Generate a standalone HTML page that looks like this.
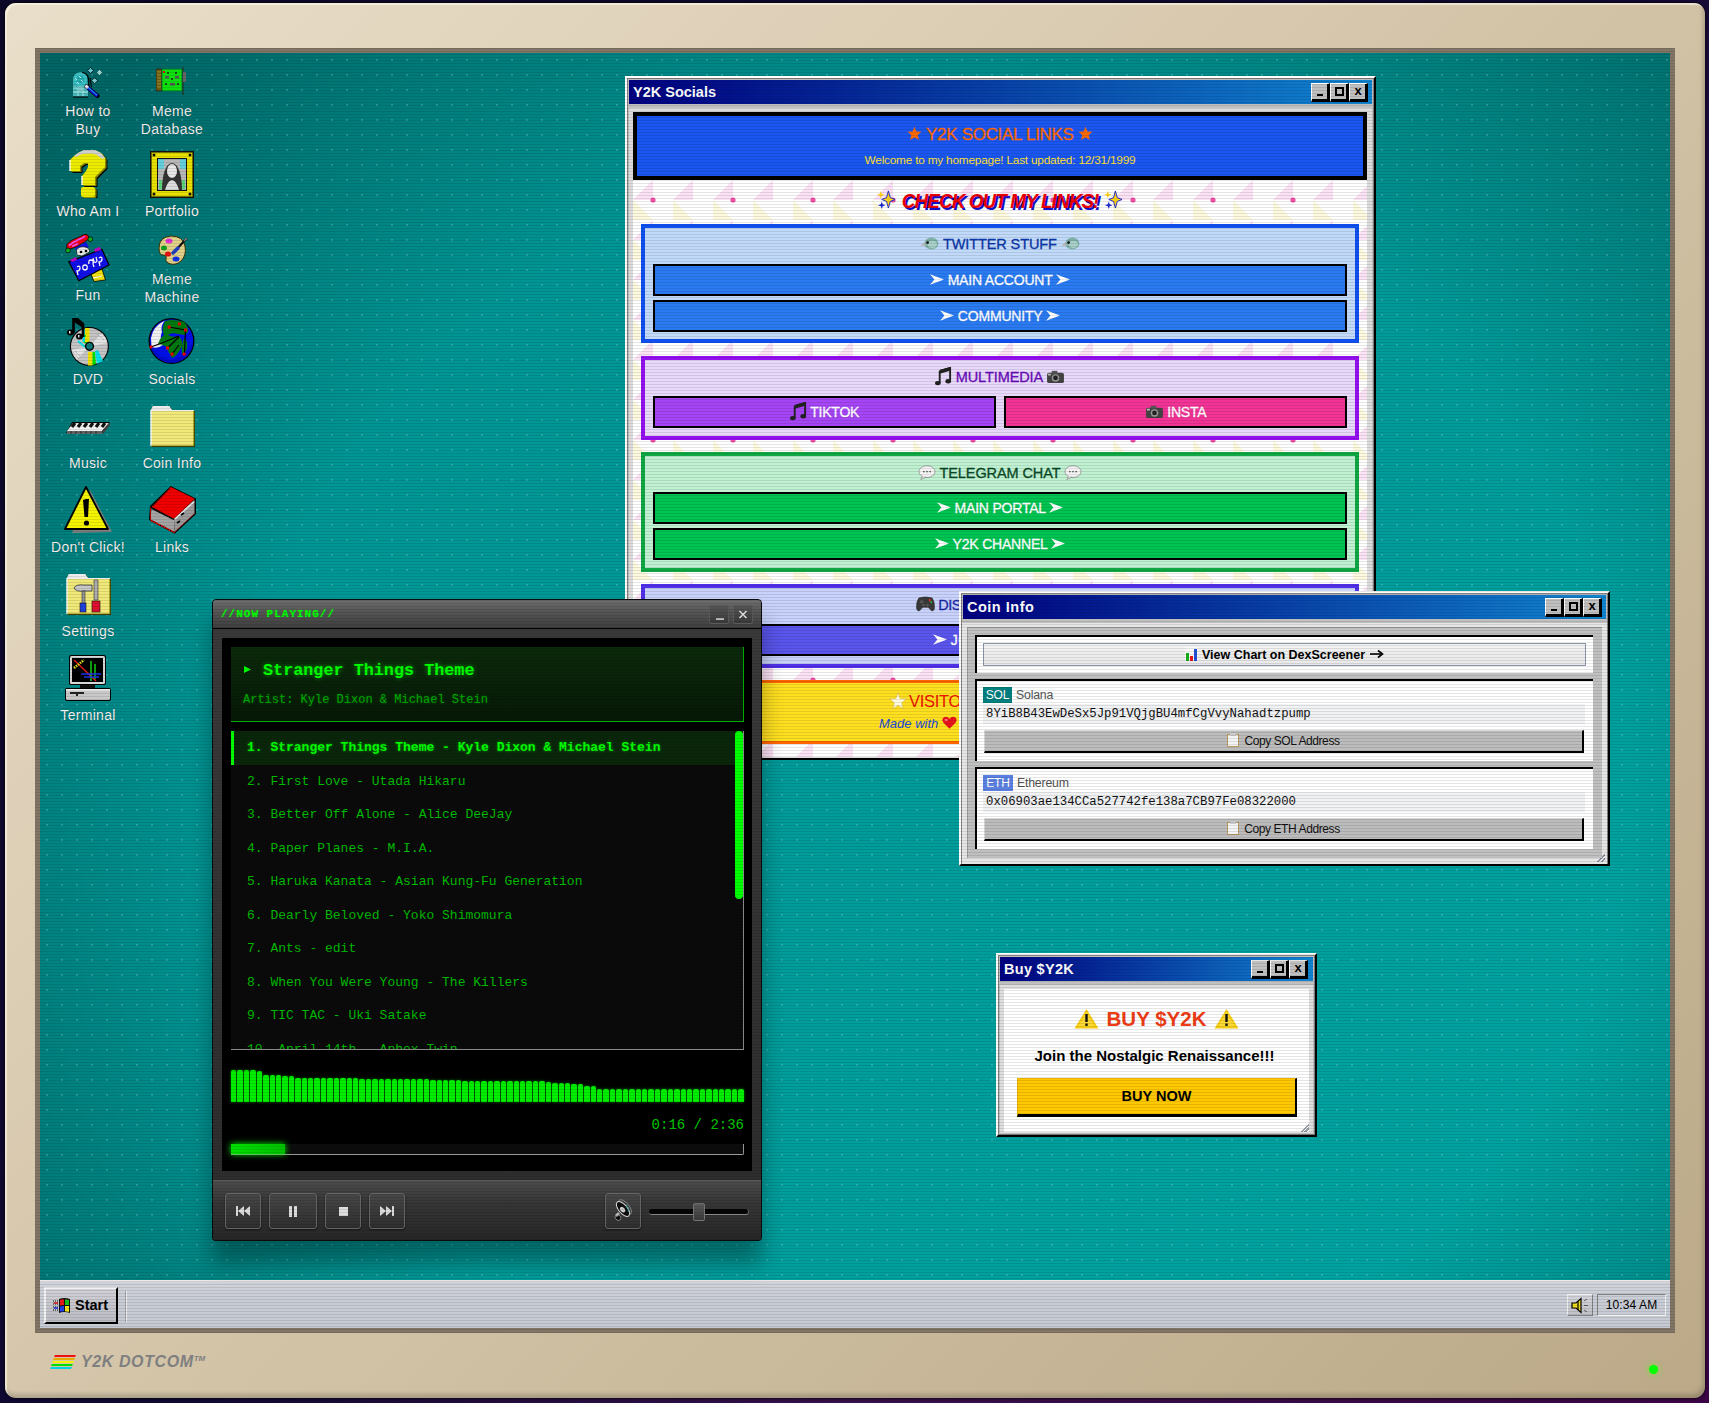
<!DOCTYPE html>
<html><head><meta charset="utf-8">
<style>
*{box-sizing:border-box;margin:0;padding:0}
html,body{width:1709px;height:1403px;overflow:hidden}
body{position:relative;font-family:"Liberation Sans",sans-serif;background:linear-gradient(135deg,#0e0828 0%,#0f0932 50%,#36104a 72%,#3c0546 100%)}
.abs{position:absolute}
#bezel{left:5px;top:3px;width:1700px;height:1395px;border-radius:11px;background:linear-gradient(135deg,#e9dec9 0%,#dfd1b9 25%,#d3c4a8 50%,#c7b798 75%,#bba988 100%);box-shadow:0 0 3px 1px rgba(0,0,0,.6),inset 2px 2px 1px rgba(255,250,235,.6),inset -2px -4px 4px rgba(0,0,0,.18)}
#frame{left:35px;top:48px;width:1640px;height:1285px;background:#817565}
#desk{left:40px;top:53px;width:1630px;height:1227px;overflow:hidden;
 background:radial-gradient(70.7% 84.9% at 55% 60%,rgba(0,0,0,0) 60%,rgba(0,0,0,.3) 100%),linear-gradient(to bottom right,rgb(0,144,143),rgb(0,165,163))}
#dots{left:40px;top:53px;width:1630px;height:1227px}
#scan{left:35px;top:48px;width:1640px;height:1285px;z-index:50;pointer-events:none;
 background:repeating-linear-gradient(180deg,rgba(0,0,0,.1) 0,rgba(0,0,0,.1) 1px,transparent 1px,transparent 3px)}
#taskbar{left:40px;top:1280px;width:1630px;height:48px;background:linear-gradient(180deg,#d0d3da 0%,#c9cdd6 40%,#c6cad3 100%);border-top:2px solid #ebe8ec}

/* win98 windows */
.win{position:absolute;background:#c0c0c0;border:2px solid;border-color:#fff #000 #000 #fff;box-shadow:inset 1px 1px #808080,inset -1px -1px #808080}
.tb{position:absolute;left:2px;right:2px;top:2px;height:24px;background:linear-gradient(90deg,#000080,#1084d0);color:#fff;font-weight:bold;font-size:14.5px;line-height:24px;padding-left:4px}
.tbb{position:absolute;top:3px;width:19px;height:19px;background:#c0c0c0;border:1px solid;border-color:#fff #000 #000 #fff;box-shadow:inset -1px -1px #000}

.pat{background-color:#fff;background-image:
 radial-gradient(circle at 20px 20px,#f050a8 0,#f050a8 2.2px,transparent 2.8px),
 linear-gradient(45deg,transparent 50%,rgba(246,205,240,.7) 50%),
 linear-gradient(135deg,rgba(252,246,205,.8) 50%,transparent 50%);
 background-size:80px 40px,40px 20px,40px 20px;background-position:0 0,0 0,0 20px;background-repeat:repeat,repeat-x,repeat-x}
.cs{font-family:"Liberation Sans",sans-serif}
.sec{position:absolute;left:8px;width:718px;border:4px solid}
.sbtn{position:absolute;left:8px;width:694px;height:32px;border:2px solid #000;color:#fff;font-size:14px;text-align:center;line-height:28px;letter-spacing:-0.2px;-webkit-text-stroke:.3px #fff}
.stitle{position:absolute;left:0;right:0;text-align:center;font-size:14.5px;height:20px;line-height:20px;letter-spacing:-0.1px;-webkit-text-stroke:.3px currentColor}
.ic{display:inline-block;vertical-align:middle}

.tbb{position:absolute;top:5px;width:19px;height:19px;background:#c0c0c0;border-style:solid;border-width:1px 2px 2px 1px;border-color:#fff #000 #000 #fff;z-index:2}
.gmin{position:absolute;left:5px;top:10px;width:6px;height:2px;background:#000}
.gmax{position:absolute;left:4px;top:3px;width:9px;height:9px;border:2px solid #000}
.gx{position:absolute;left:0;top:0;width:16px;line-height:14px;text-align:center;font-style:normal;font-weight:bold;font-size:13px;color:#000}

.np{background:linear-gradient(180deg,#3a3a3a 0%,#333 50%,#2c2c2c 100%);border:1px solid #0a0a0a;border-radius:4px 4px 3px 3px;overflow:hidden;box-shadow:0 22px 22px rgba(0,0,0,.33)}
.nptb{left:0;top:0;width:548px;height:29px;background:linear-gradient(180deg,#6e6e6e 0%,#565656 40%,#3e3e3e 100%);border-bottom:1px solid #000}
.npt{position:absolute;left:8px;top:6px;font-family:'Liberation Mono',monospace;font-weight:bold;font-size:11px;letter-spacing:1px;color:#00ff00;line-height:16px;text-shadow:0 0 2px rgba(0,255,0,.4)}
.npbtn{position:absolute;top:5px;width:20px;height:19px;border:1px solid #5a5a5a;border-radius:2px;background:linear-gradient(180deg,#555,#3a3a3a)}
.npbox{background:linear-gradient(180deg,#0b2a0b 0%,#061806 100%);border-right:1px solid #00b000;border-bottom:1px solid #00b000}
.pl{background:#0a0a0a;overflow:hidden;border-right:1px solid #8a8a8a;border-bottom:1px solid #8a8a8a}
.pli{height:33.5px;line-height:33.5px;padding-left:16px;font-family:'Liberation Mono',monospace;font-size:13px;color:#00bb00;white-space:nowrap}
.pli.act{background:#0a260a;color:#00ff00;font-weight:bold;border-left:3px solid #00ff00;padding-left:13px;text-shadow:0 0 3px rgba(0,255,0,.5)}
.viz{display:flex;align-items:flex-end;gap:1px}
.viz i{display:block;flex:1;background:#00ee00;border-radius:2px 2px 0 0;box-shadow:0 0 3px rgba(0,255,0,.5)}
.npctl{left:0;top:580px;width:548px;height:61px;background:linear-gradient(180deg,#4c4c4c 0%,#363636 35%,#262626 100%);border-top:1px solid #5a5a5a}
.npc{position:absolute;top:12px;height:36px;border:1px solid #666;border-radius:3px;background:linear-gradient(180deg,#474747,#2e2e2e);display:flex;align-items:center;justify-content:center;box-shadow:0 1px 2px rgba(0,0,0,.5)}

.card{position:absolute;width:618px;background:#fff;border-top:2px solid #000;border-left:2px solid #000}
.badge{height:16px;line-height:16px;color:#fff;font-size:12px;text-align:center;letter-spacing:-0.2px}
.clab{height:16px;line-height:16px;color:#555;font-size:12.3px;letter-spacing:-0.2px;margin-left:0}
.addr{width:602px;height:20px;line-height:20px;background:#f1f2f4;padding-left:3px;font-family:'Liberation Mono',monospace;font-size:12.3px;color:#111}
.cbtn{width:600px;height:23px;background:#bcbcbc;border-right:2px solid #000;border-bottom:2px solid #000;border-top:1px solid #d8d8d8;border-left:1px solid #d8d8d8;text-align:center;font-size:12px;line-height:20px;color:#111;letter-spacing:-0.4px}
.ilab{position:absolute;width:120px;height:18px;line-height:18px;text-align:center;color:#f2f2f2;font-size:14px;letter-spacing:.3px;text-shadow:0 0 1px rgba(0,40,40,.6)}
</style></head>
<body>
<svg width="0" height="0" style="position:absolute">
<defs>
<symbol id="arrow" viewBox="0 0 16 12"><path d="M0 0 L16 6 L0 12 L5 6 Z" fill="#fff"/></symbol>
<symbol id="star5" viewBox="0 0 20 20"><path d="M10 1 L12.6 7.2 L19.5 7.6 L14.2 12 L15.9 18.8 L10 15 L4.1 18.8 L5.8 12 L0.5 7.6 L7.4 7.2 Z"/></symbol>
<symbol id="bird" viewBox="0 0 20 16"><ellipse cx="12" cy="8" rx="7.5" ry="6.5" fill="#7fb0a8"/><ellipse cx="13" cy="9" rx="5" ry="4" fill="#a8d0c8"/><path d="M5 7 L0 10 L6 11 Z" fill="#b8b8b8"/><circle cx="8" cy="7" r="1.4" fill="#111"/></symbol>
<symbol id="note" viewBox="0 0 18 20"><path d="M5 4 L16 1 L16 15" stroke="#222" stroke-width="2" fill="none"/><path d="M5 4 L5 17" stroke="#222" stroke-width="2"/><path d="M5 3 L16 0 L16 4 L5 7Z" fill="#222"/><ellipse cx="3" cy="17" rx="3" ry="2.3" fill="#222"/><ellipse cx="14" cy="15" rx="3" ry="2.3" fill="#222"/></symbol>
<symbol id="cam" viewBox="0 0 20 16"><rect x="1" y="4" width="18" height="11" rx="2" fill="#444"/><rect x="6" y="2" width="6" height="3" fill="#555"/><circle cx="10" cy="9.5" r="4" fill="#999"/><circle cx="10" cy="9.5" r="2.5" fill="#222"/><rect x="2" y="5" width="3" height="2" fill="#bbb"/></symbol>
<symbol id="bubble" viewBox="0 0 20 18"><ellipse cx="10" cy="8" rx="9" ry="6.5" fill="#f4f4f4" stroke="#9a9a9a" stroke-width="1"/><path d="M5 13 L3 17 L9 14" fill="#f4f4f4" stroke="#9a9a9a" stroke-width="1"/><circle cx="6.5" cy="8" r="1" fill="#666"/><circle cx="10" cy="8" r="1" fill="#666"/><circle cx="13.5" cy="8" r="1" fill="#666"/></symbol>
<symbol id="pad" viewBox="0 0 20 17"><path d="M3 2 Q10 0 17 2 Q20 6 19.5 13 Q19 16.5 16 15.5 Q14 12 12 12 L8 12 Q6 12 4 15.5 Q1 16.5 0.5 13 Q0 6 3 2Z" fill="#3a3a3a" stroke="#222" stroke-width=".6"/><circle cx="14.5" cy="4.5" r="1.2" fill="#e33"/><circle cx="16" cy="6.5" r="1" fill="#3c3"/><circle cx="6" cy="6" r="2" fill="#555"/><circle cx="8" cy="9.5" r="1.6" fill="#555"/><circle cx="12" cy="9.5" r="1.6" fill="#555"/></symbol>
<symbol id="heart" viewBox="0 0 18 16"><path d="M9 15 L2 8 Q-1 4 2 1.5 Q6 -1 9 3 Q12 -1 16 1.5 Q19 4 16 8 Z" fill="#e8141c"/><ellipse cx="5" cy="4.5" rx="2" ry="1.3" fill="#ff8080"/></symbol>
<symbol id="spark" viewBox="0 0 20 20"><path d="M12 1 L14 8 L19 10 L14 12 L12 19 L10 12 L5 10 L10 8Z" fill="#ffd21a" stroke="#1a2ad0" stroke-width="1"/><path d="M4 1 L5 4 L8 5 L5 6 L4 9 L3 6 L0 5 L3 4Z" fill="#ffd21a"/><path d="M5 12 L6 15 L9 16 L6 17 L5 20 L4 17 L1 16 L4 15Z" fill="#1a2ad0"/></symbol>
<symbol id="starw" viewBox="0 0 20 20"><path d="M10 1 L12.6 7.2 L19.5 7.6 L14.2 12 L15.9 18.8 L10 15 L4.1 18.8 L5.8 12 L0.5 7.6 L7.4 7.2 Z" fill="#fffbe0" stroke="#e8c84a" stroke-width="1"/></symbol>
<pattern id="ptri" x="0" y="28" width="40" height="40" patternUnits="userSpaceOnUse"><path d="M0 20 L20 0 L20 20Z" fill="#fbe2f5"/><path d="M0 20 L20 40 L0 40Z" fill="#fdf9de"/></pattern>
<pattern id="pdot" x="0" y="28" width="80" height="80" patternUnits="userSpaceOnUse"><circle cx="20" cy="60" r="2.6" fill="#f04fa6"/></pattern>
<symbol id="warn" viewBox="0 0 25 21"><path d="M12.5 1 L24.5 20.5 L0.5 20.5Z" fill="#f7cc10"/><path d="M12.5 4 L21 18.5 L4 18.5Z" fill="#ffe14a" opacity=".6"/><rect x="11.3" y="6" width="2.4" height="8" fill="#111"/><rect x="11.3" y="15.5" width="2.4" height="2.4" fill="#111"/></symbol>
</defs></svg>
<div id="bezel" class="abs"></div>
<div id="frame" class="abs"></div>
<div id="desk" class="abs"></div>
<svg id="dots" class="abs" width="1630" height="1227"><defs><pattern id="pdesk" width="15" height="15" patternUnits="userSpaceOnUse"><rect x="6" y="6" width="2" height="2" fill="rgba(190,250,245,.2)"/></pattern></defs><rect width="1630" height="1227" fill="url(#pdesk)"/></svg>
<!--ICONS-->
<div class="abs" style="left:72px;top:66px;width:32px;height:32px"><svg width="32" height="32" viewBox="0 0 32 32">
<path d="M1 14 Q1 7 8 6 Q13 6 15 10 L16 22 L16 31 L1 31Z" fill="#3fb2b4"/>
<circle cx="8.3" cy="13.4" r="6.5" fill="#38c4c8"/><circle cx="8.3" cy="13.4" r="4" fill="#1a9a9c" opacity=".6"/>
<path d="M3 12 l2 2 M7 10 l2 2 M9 14 l2 2 M5 16 l2 2" stroke="#b8f0f0" stroke-width="1"/>
<path d="M10 6.5 Q15 7 16.5 12 L17 21" stroke="#000" stroke-width="1.2" fill="none"/>
<rect x="1" y="20" width="15" height="10.5" fill="#46b6b8"/>
<path d="M1.5 22 h4 M6 22 v8 M11 22 v8 M1 26 h15" stroke="#a8e8e8" stroke-width="1"/><rect x="6" y="20.5" width="5" height="5" fill="#7ccaca"/>
<path d="M1 31 h15" stroke="#000" stroke-width="1.2"/>
<path d="M14.5 20.5 L25.5 30" stroke="#000" stroke-width="4.2" stroke-linecap="round"/><path d="M14.5 20.5 L25.5 30" stroke="#1010d8" stroke-width="3"/><path d="M15.5 21 L25 29.2" stroke="#20e0e0" stroke-width=".9"/><path d="M13.5 19.5 L16 22" stroke="#e8e8e8" stroke-width="3"/>
<path d="M18.5 1.5 L21.5 4.5 L18.5 7.5 L15.5 4.5Z" fill="#60c8cc" stroke="#000" stroke-width=".7"/><path d="M27.5 3.5 L30.5 6.5 L27.5 9.5 L24.5 6.5Z" fill="#9ad8d8" stroke="#1a4a4a" stroke-width=".7"/><path d="M22.6 11.7 L25.6 14.7 L22.6 17.7 L19.6 14.7Z" fill="#7ad0d4" stroke="#000" stroke-width=".7"/>
<path d="M18 12 L19.5 21" stroke="#000" stroke-width="1"/>
</svg></div>
<div class="ilab" style="left:28px;top:102px">How to</div>
<div class="ilab" style="left:28px;top:120px">Buy</div>
<div class="abs" style="left:156px;top:66px;width:32px;height:32px"><svg width="32" height="32" viewBox="0 0 32 32">
<rect x="0" y="3" width="6" height="22" fill="#6a5a10" stroke="#222" stroke-width=".8"/><path d="M1 6 h4 M1 9 h4 M1 12 h4 M1 15 h4 M1 18 h4 M1 21 h4" stroke="#a89838" stroke-width="1"/>
<rect x="6" y="3" width="20" height="22" fill="#10e010" stroke="#063" stroke-width=".8"/>
<rect x="7" y="5" width="2" height="2" fill="#e01010"/>
<rect x="9" y="10" width="4" height="2.5" fill="#555"/><rect x="19" y="10" width="4" height="2.5" fill="#555"/><rect x="14" y="17" width="5" height="2.5" fill="#555"/>
<circle cx="12" cy="7" r=".9" fill="#111"/><circle cx="16" cy="13" r=".9" fill="#111"/><circle cx="10" cy="18" r=".9" fill="#111"/><circle cx="22" cy="18" r=".9" fill="#111"/><circle cx="20" cy="7" r=".9" fill="#111"/>
<rect x="26" y="1" width="2" height="28" fill="#1a4a3a"/><rect x="27" y="6" width="3" height="10" fill="#666"/>
</svg></div>
<div class="ilab" style="left:112px;top:102px">Meme</div>
<div class="ilab" style="left:112px;top:120px">Database</div>
<div class="abs" style="left:64px;top:150px;width:48px;height:48px"><svg width="48" height="48" viewBox="0 0 48 48">
<g transform="translate(2.5,2)"><path d="M6 10 L10 6 L14 3 L20 0 L31 0 L37 3 L41 8 L41 17 L37 21 L33 25 L31 27 L31 35 L18 35 L18 26 L22 21 L24 17 L24 13 L20 13 L16 16 L16 21 L6 21 Z" fill="#000"/><rect x="17" y="37" width="14" height="10" rx="2" fill="#000"/></g>
<g transform="translate(1.5,1)"><path d="M6 10 L10 6 L14 3 L20 0 L31 0 L37 3 L41 8 L41 17 L37 21 L33 25 L31 27 L31 35 L18 35 L18 26 L22 21 L24 17 L24 13 L20 13 L16 16 L16 21 L6 21 Z" fill="#8a8a00"/><rect x="17" y="37" width="14" height="10" rx="2" fill="#8a8a00"/></g>
<path d="M6 10 L10 6 L14 3 L20 0 L31 0 L37 3 L41 8 L41 17 L37 21 L33 25 L31 27 L31 35 L18 35 L18 26 L22 21 L24 17 L24 13 L20 13 L16 16 L16 21 L6 21 Z" fill="#ecec00"/>
<path d="M10 6 L14 3 L20 0 L31 0 L37 3 L41 8 L38 9 L33 5 L28 3.5 L18 4 L12 7Z" fill="#d0d0d0"/>
<path d="M6 10 L6 21 M18 26 L18 35" stroke="#fff" stroke-width="1.4"/>
<rect x="17" y="37" width="14" height="10" rx="2" fill="#ecec00"/>
</svg></div>
<div class="ilab" style="left:28px;top:202px">Who Am I</div>
<div class="abs" style="left:148px;top:150px;width:48px;height:48px"><svg width="48" height="48" viewBox="0 0 48 48">
<rect x="2" y="1" width="44" height="47" fill="#111"/><rect x="3.5" y="2.5" width="41" height="44" fill="#e8e000" stroke="#6a6a00" stroke-width="1" stroke-dasharray="2 1.5"/>
<rect x="9" y="8" width="30" height="33" fill="#111"/><rect x="10" y="9" width="28" height="31" fill="#b8b8b8"/>
<rect x="10" y="9" width="6" height="10" fill="#40d8e8" opacity=".7"/><rect x="32" y="9" width="6" height="10" fill="#40d8e8" opacity=".7"/>
<path d="M14 40 Q14 24 19 16 Q24 10 29 16 Q34 24 34 40Z" fill="#333"/><ellipse cx="24" cy="21" rx="5" ry="7" fill="#e8e8e8"/><path d="M17 40 Q20 30 24 30 Q28 30 31 40Z" fill="#ddd"/>
<rect x="11" y="30" width="3" height="9" fill="#30e060" opacity=".7"/><rect x="34" y="30" width="3" height="9" fill="#30e060" opacity=".7"/>
<circle cx="6" cy="5" r="1.5" fill="#111"/><circle cx="42" cy="5" r="1.5" fill="#111"/><circle cx="6" cy="44" r="1.5" fill="#111"/><circle cx="42" cy="44" r="1.5" fill="#111"/>
</svg></div>
<div class="ilab" style="left:112px;top:202px">Portfolio</div>
<div class="abs" style="left:64px;top:234px;width:48px;height:48px"><svg width="48" height="48" viewBox="0 0 48 48">
<path d="M2.5 15 L3 10 L8 6 L14 3.5 L20 0.5 L23 0.5 L25.5 4 L22 7 L17 10 L12 13 L6 15Z" fill="#f00010" stroke="#000" stroke-width=".7"/>
<path d="M5 11.5 L10 8 L16 5 L21 2.5 M8 12.5 L14 9.5" stroke="#f050f0" stroke-width="1.6"/>
<circle cx="26.3" cy="5.2" r="2.4" fill="#10b020" stroke="#000" stroke-width=".7"/><circle cx="4" cy="16.4" r="2.4" fill="#10b020" stroke="#000" stroke-width=".7"/>
<path d="M11 14 L22 8 L25 13 L14 19Z" fill="#1010e0"/>
<path d="M12.4 16 Q15 12 21 13 Q26 14 25.5 18 L18 22 L13 21Z" fill="#e8e8e8" stroke="#000" stroke-width=".6"/><circle cx="17" cy="18" r="1.3" fill="#000"/><circle cx="22" cy="17" r="1.3" fill="#000"/>
<path d="M25.9 37.5 L38 35 L41.5 46 L30 47.5Z" fill="#f0e010" stroke="#000" stroke-width=".8"/><path d="M29 44 L38 42" stroke="#fff" stroke-width="1"/>
<path d="M4.8 27.9 L37.9 15.2 L45.1 31.1 L14.8 46.7Z" fill="#1010e8" stroke="#000" stroke-width="1.2"/>
<path d="M6 26 L12 23 L13 26 L8 28Z" fill="#c000c0"/><path d="M30 15 L36 13 L37 16 L31 18Z" fill="#c000c0"/>
<path d="M13 33 q3 -2 3 1 q0 3 -3 3 l1 4 M19 35 q-1 -4 2 -4 q3 0 2 4 q-2 2 -4 0 M25 30 q-1 -4 2 -4 q3 0 2 4 l1 3 M29 24 l1 4 q2 1 3 -1 l-1 -4 M35 24 q3 -2 3 1 q0 3 -3 3 l1 4" stroke="#fff" stroke-width="1.3" fill="none"/>
</svg></div>
<div class="ilab" style="left:28px;top:286px">Fun</div>
<div class="abs" style="left:156px;top:234px;width:32px;height:32px"><svg width="32" height="32" viewBox="0 0 32 32">
<path d="M3 14 Q3 3 15 2 Q27 2 29 12 Q31 22 24 28 Q18 32 12 29 Q9 27 10 24 Q11 21 7 21 Q3 21 3 14Z" fill="#e0d088" stroke="#3a3000" stroke-width="1"/>
<ellipse cx="13" cy="7" rx="3.5" ry="2.5" fill="#e030d8"/><ellipse cx="8" cy="14" rx="3" ry="2.5" fill="#10a020"/><ellipse cx="12" cy="20" rx="3" ry="2.6" fill="#e81010"/><ellipse cx="20" cy="25" rx="3.5" ry="2.5" fill="#1030e8"/>
<path d="M19 17 L31 4" stroke="#111" stroke-width="2.2"/><path d="M17 19 L22 14" stroke="#2040c0" stroke-width="3.5" stroke-linecap="round"/><path d="M28 7 L31 4" stroke="#888" stroke-width="1.5"/>
</svg></div>
<div class="ilab" style="left:112px;top:270px">Meme</div>
<div class="ilab" style="left:112px;top:288px">Machine</div>
<div class="abs" style="left:64px;top:318px;width:48px;height:48px"><svg width="48" height="48" viewBox="0 0 48 48">
<circle cx="25.4" cy="28.4" r="19.5" fill="#000"/><circle cx="25.4" cy="28.4" r="18.4" fill="#c4c4c4"/>
<path d="M25.4 28.4 L38 15 Q42 19 43 25Z" fill="#e8e8e8" opacity=".9"/><path d="M25.4 28.4 L12.8 41.8 Q9 38 7.8 32Z" fill="#e8e8e8" opacity=".9"/>
<path d="M33 16 L40 22 M36 14 L42 20 M9 34 L15 41 M11 33 L17 39" stroke="#9a9a9a" stroke-width="1" stroke-dasharray="1 1"/>
<rect x="21" y="10" width="4.5" height="14" fill="#f0e000"/><rect x="18.5" y="11" width="2.5" height="13" fill="#00e0e8"/>
<rect x="24" y="34" width="4.5" height="13.5" fill="#f0e000"/><path d="M28.5 34 L31 34 L32 46 L28.5 47Z" fill="#00e000"/><path d="M31 33 L34 32 L39 43 L33 46Z" fill="#00e0e8"/>
<path d="M14 23 L21 29" stroke="#00e0e8" stroke-width="2"/><path d="M16 19 Q19 17 22 18 M20 24 Q23 26 25 24" stroke="#00e000" stroke-width="1.6" fill="none"/>
<circle cx="25.5" cy="28.3" r="4.6" fill="#000"/><circle cx="25.5" cy="28.3" r="3.2" fill="#0a7a7a"/>
<path d="M9.5 15 L9.5 0 L12 0 L19 6 L19 19" stroke="#000" stroke-width="2.6" fill="none" stroke-linejoin="bevel"/>
<path d="M10 0 L19 6 L19 10 L10 4Z" fill="#000"/>
<ellipse cx="6.5" cy="14.5" rx="3.6" ry="3" fill="#000"/><ellipse cx="15.5" cy="18.5" rx="3.6" ry="3" fill="#000"/>
<rect x="5" y="13" width="1.5" height="2.5" fill="#e8e8e8"/><rect x="14" y="17" width="1.5" height="2.5" fill="#e8e8e8"/>
</svg></div>
<div class="ilab" style="left:28px;top:370px">DVD</div>
<div class="abs" style="left:148px;top:318px;width:48px;height:48px"><svg width="48" height="48" viewBox="0 0 48 48">
<circle cx="23.5" cy="23" r="23" fill="#000"/><circle cx="23.5" cy="23" r="21.8" fill="#0010e8"/>
<path d="M23.5 23 m-21.8 0 a21.8 21.8 0 0 0 43.6 0 Q40 38 24 42 Q10 40 3 28Z" fill="#0008b0" opacity=".55"/>
<path d="M3 20 Q5 8 17 2.5 Q12 8 14 14 Q11 20 15 27 Q10 31 3.5 29Z" fill="#f0f0f0"/>
<path d="M17 3 Q26 0.5 36 4 Q41 9 40 14 L37 17 L30 16 Q24 14 20 17 Q26 20 31 18 Q36 24 33 30 Q29 38 24 40 Q20 34 19 29 Q14 26 10 26 Q12 20 16 17 Q13 11 17 3Z" fill="#007a10"/>
<path d="M36 20 Q40 22 39 30 Q37 36 34 36 Q33 28 36 20Z" fill="#007a10"/>
<path d="M21 9 L37.5 12 M37.5 12 L36.5 36 M14 25 L31 18 M19.5 30 L31 19 M24 36 L31 27 M3 29 L14 25" stroke="#000" stroke-width="1.2"/>
<rect x="19.5" y="7.5" width="3.2" height="3.2" rx="1.2" fill="#ee0000"/><rect x="30" y="4.5" width="3" height="3" fill="#ee0000"/><rect x="36" y="10.5" width="3" height="3" fill="#ee0000"/>
<rect x="1.5" y="27.5" width="3" height="3" rx="1" fill="#ee0000"/><rect x="18" y="28.5" width="3" height="3" fill="#ee0000"/><rect x="22.5" y="34.5" width="3.2" height="3.2" rx="1.2" fill="#ee0000"/><rect x="34.5" y="34.5" width="3.2" height="3.2" rx="1.2" fill="#ee0000"/>
</svg></div>
<div class="ilab" style="left:112px;top:370px">Socials</div>
<div class="abs" style="left:64px;top:402px;width:48px;height:48px"><svg width="48" height="48" viewBox="0 0 48 48">
<path d="M8 20 L46 20 L38 31 L2 31Z" fill="#000"/>
<path d="M9 21 L45 21 L38 29 L3 29Z" fill="#f0f0f0"/>
<path d="M3 29 L38 29 L38 32 L3 32Z" fill="#666"/><path d="M38 29 L45 21 L46 23 L39 32Z" fill="#444"/>
<path d="M11 21 L8 25 M17 21 L14 25 M23 21 L20 25 M29 21 L26 25 M35 21 L32 25 M41 21 L38 25" stroke="#111" stroke-width="3"/>
<path d="M7 29 v3 M12 29 v3 M17 29 v3 M22 29 v3 M27 29 v3 M32 29 v3" stroke="#222" stroke-width=".8"/>
</svg></div>
<div class="ilab" style="left:28px;top:454px">Music</div>
<div class="abs" style="left:148px;top:402px;width:48px;height:48px"><svg width="48" height="48" viewBox="0 0 48 48">
<path d="M3 8 L5 4 L21 4 L24 8 L46 8 L46 44 L3 44Z" fill="#000" transform="translate(1,1)"/>
<path d="M3 8 L5 4 L21 4 L24 8 L46 8 L46 44 L3 44Z" fill="#f0e878"/>
<path d="M3 8 L5 4 L21 4 L24 8 L46 8 L46 9 L3 9Z" fill="#ececec"/><path d="M3 8 L3 44" stroke="#f8f8f8" stroke-width="1.5"/>
<path d="M46 9 L46 44 L3 44" stroke="#808000" stroke-width="1.2" fill="none"/>
</svg></div>
<div class="ilab" style="left:112px;top:454px">Coin Info</div>
<div class="abs" style="left:64px;top:486px;width:48px;height:48px"><svg width="48" height="48" viewBox="0 0 48 48">
<path d="M26 4 L48 46 L8 47 Z" fill="#808080"/>
<path d="M22 1 L44 43 L1 43 Z" fill="#f4f400" stroke="#000" stroke-width="1.8" stroke-linejoin="round"/>
<path d="M22 13 L25 13 L24 31 L20.5 31 L19 14Z" fill="#000"/><circle cx="22.5" cy="37" r="2.6" fill="#000"/>
</svg></div>
<div class="ilab" style="left:28px;top:538px">Don't Click!</div>
<div class="abs" style="left:148px;top:486px;width:48px;height:48px"><svg width="48" height="48" viewBox="0 0 48 48">
<path d="M2 20 L22.7 0 L48 12.5 L48 28 L26.7 47.8 L1 34 Z" fill="#000"/>
<path d="M3.5 22 L25.9 33 L26.7 46 L2.5 33.5Z" fill="#a4a4a4"/>
<path d="M25.9 32.7 L46.5 13.8 L46.5 27.5 L26.7 46Z" fill="#9a9a9a"/>
<path d="M27 33 L46 15.5" stroke="#e8e8e8" stroke-width="1.6"/>
<path d="M36 21 l3 -2 M33 29 l3 -2 M29 37 l3 -2" stroke="#000" stroke-width="1.6"/>
<path d="M3.6 20.7 L22.7 1 L46.8 12.8 L25.9 32.7 Z" fill="#ee0000"/>
<path d="M5 20 L22 2.5" stroke="#000" stroke-width="1" stroke-dasharray="1.2 1"/>
<path d="M3.6 22.5 L25.9 33.5" stroke="#000" stroke-width="1.2"/>
<path d="M3 34.5 L26.5 46.5" stroke="#ee0000" stroke-width="1.6" stroke-dasharray="2 .8"/><path d="M27 45.5 L46.5 27.5" stroke="#ee0000" stroke-width="1" stroke-dasharray="1 1.2"/>
<path d="M2.5 21.5 L2.5 34" stroke="#c00000" stroke-width="1"/>
</svg></div>
<div class="ilab" style="left:112px;top:538px">Links</div>
<div class="abs" style="left:64px;top:570px;width:48px;height:48px"><svg width="48" height="48" viewBox="0 0 48 48">
<path d="M3 8 L5 4 L21 4 L24 8 L46 8 L46 44 L3 44Z" fill="#000" transform="translate(1,1)"/>
<path d="M3 8 L5 4 L21 4 L24 8 L46 8 L46 44 L3 44Z" fill="#f0e878"/>
<path d="M3 8 L5 4 L21 4 L24 8 L46 8 L46 9 L3 9Z" fill="#ececec"/><path d="M3 8 L3 44" stroke="#f8f8f8" stroke-width="1.5"/>
<path d="M46 9 L46 44 L3 44" stroke="#808000" stroke-width="1.2" fill="none"/>
<path d="M10 18 Q12 14 20 15 L28 15 L28 21 L20 21 Q12 22 10 18Z" fill="#c8c8c8" stroke="#333" stroke-width=".8"/>
<rect x="18" y="21" width="3" height="13" fill="#999" stroke="#333" stroke-width=".6"/><rect x="16" y="33" width="6" height="9" fill="#2040e0" stroke="#111" stroke-width=".6"/>
<path d="M30 10 L34 10 L34 30 L30 30Z" fill="#b0b0b0" stroke="#333" stroke-width=".6"/><rect x="28" y="31" width="8" height="11" fill="#e01030" stroke="#111" stroke-width=".6"/>
</svg></div>
<div class="ilab" style="left:28px;top:622px">Settings</div>
<div class="abs" style="left:64px;top:654px;width:48px;height:48px"><svg width="48" height="48" viewBox="0 0 48 48">
<rect x="5" y="1" width="37" height="30" rx="2" fill="#000"/><rect x="6" y="2" width="35" height="28" rx="1.5" fill="#d8d8d8"/><rect x="8" y="4" width="31" height="24" fill="#000"/>
<path d="M10 6 L32 27" stroke="#e81818" stroke-width="1.5"/><path d="M10 14 L20 6" stroke="#e8e018" stroke-width="2.5" stroke-dasharray="1.5 1"/>
<path d="M27 7 L27 27 M31 10 L31 25" stroke="#18e018" stroke-width="1.4"/><path d="M17 20 L37 20 M20 23 L35 23" stroke="#1830e8" stroke-width="1.4"/>
<rect x="16" y="31" width="15" height="3" fill="#111"/>
<rect x="1" y="34" width="46" height="13" rx="2" fill="#000"/><rect x="2" y="35" width="44" height="11" rx="1.5" fill="#c8c8c8"/><rect x="2" y="35" width="44" height="2" fill="#f0f0f0"/>
<rect x="6" y="38" width="14" height="2" fill="#222"/><rect x="12" y="40" width="2" height="2" fill="#222"/>
</svg></div>
<div class="ilab" style="left:28px;top:706px">Terminal</div>
<!--/ICONS-->
<div id="taskbar" class="abs">
 <div class="abs" style="left:4px;top:5px;width:74px;height:37px;border:2px solid;border-color:#f4f4f4 #000 #000 #f4f4f4;background:linear-gradient(180deg,#d0d0d6,#bcbcc4)">
  <svg class="abs" style="left:7px;top:8px" width="18" height="17" viewBox="0 0 18 17"><path d="M0 4 h5 M0 7 h5 M0 10 h5 M0 13 h5" stroke="#000" stroke-width="1" stroke-dasharray="1 1"/><path d="M1 6 h4" stroke="#e01010" stroke-width="1.5"/><path d="M1 11 h4" stroke="#1030e0" stroke-width="1.5"/><path d="M6 2 Q11 0 17 2 L17 16 Q11 14 6 16Z" fill="#111"/><path d="M7 3 Q9 2 11 2.5 L11 8 L7 8.5Z" fill="#e81818"/><path d="M12 2.5 Q14 2.2 16 3 L16 8 L12 8Z" fill="#18c018"/><path d="M7 9.5 L11 9 L11 14.5 Q9 14 7 14.8Z" fill="#2040f0"/><path d="M12 9 L16 9 L16 15 Q14 14.2 12 14.5Z" fill="#f0e020"/></svg>
  <div class="abs" style="left:29px;top:7px;font-weight:bold;font-size:14.5px;line-height:18px;color:#000">Start</div>
 </div>
 <div class="abs" style="left:85px;top:9px;width:2px;height:31px;background:#eeeef0;border-left:1px solid #a0a0a8"></div>
 <div class="abs" style="left:1527px;top:12px;width:26px;height:22px;border:1px solid;border-color:#f0f0f0 #808080 #808080 #f0f0f0;background:linear-gradient(180deg,#d4d4da,#c0c0c8)">
  <svg class="abs" style="left:3px;top:2px" width="20" height="17" viewBox="0 0 20 17"><path d="M1 6 L5 6 L10 1.5 L10 15.5 L5 11 L1 11Z" fill="#f0e020" stroke="#000" stroke-width="1.2"/><path d="M7 4 L7 13" stroke="#000" stroke-width="1.2"/><path d="M13 4 L16 2 M13 8.5 L17 8.5 M13 13 L16 15" stroke="#555" stroke-width="0.9"/></svg>
 </div>
 <div class="abs" style="left:1557px;top:12px;width:69px;height:22px;border:1px solid;border-color:#808080 #f4f4f4 #f4f4f4 #808080;font-size:12px;line-height:20px;text-align:center;color:#000;letter-spacing:0.1px">10:34 AM</div>
</div>
<div class="abs" style="left:50px;top:1354px;width:28px;height:16px">
 <svg width="28" height="16" viewBox="0 0 28 16"><path d="M5 1 L26 1 L25 3 L4 3Z" fill="#ee1010"/><path d="M4 4 L25 4 L24 6 L3 6Z" fill="#e8a800"/><path d="M3 7 L24 7 L23 9 L2 9Z" fill="#f8f000"/><path d="M2 10 L23 10 L22 12 L1 12Z" fill="#00dd00"/><path d="M1 13 L22 13 L21 15 L0 15Z" fill="#00d0e0"/></svg>
</div>
<div class="abs" style="left:81px;top:1349px;font-weight:bold;font-style:italic;font-size:16px;line-height:20px;color:#7f7f80;letter-spacing:0.6px">Y2K DOTCOM<span style="font-size:8px;vertical-align:6px;letter-spacing:0">TM</span></div>
<div class="abs" style="left:1649px;top:1365px;width:9px;height:9px;border-radius:50%;background:#00ff00;box-shadow:0 0 5px 2px rgba(120,230,60,.45)"></div>

<!-- Socials -->
<div class="win" style="left:625px;top:76px;width:751px;height:684px;z-index:1">
 <div class="tb">Y2K Socials</div>
 <div class="tbb" style="left:684px"><i class="gmin"></i></div><div class="tbb" style="left:703px"><i class="gmax"></i></div><div class="tbb" style="left:722px"><i class="gx">x</i></div>
 <div class="abs" style="left:2px;top:30px;width:743px;height:650px;background:#dcdcdc"></div>
 <div class="abs" style="left:6px;top:34px;width:734px;height:645px;overflow:hidden;background:#fff">
  <svg class="abs" style="left:0;top:0" width="734" height="645"><rect width="734" height="645" fill="url(#ptri)"/><rect width="734" height="645" fill="url(#pdot)"/></svg>
  <div class="abs" style="left:0;top:0;width:734px;height:68px;border:4px solid #000;background:#1a56f0;text-align:center">
   <div class="abs" style="left:0;right:0;top:9px;height:20px;line-height:20px;color:#ff6a00;font-size:17px;letter-spacing:-0.3px;-webkit-text-stroke:.3px #ff6a00"><svg class="ic" width="15" height="15" style="fill:#ff6a00;margin-top:-4px"><use href="#star5"/></svg> Y2K SOCIAL LINKS <svg class="ic" width="15" height="15" style="fill:#ff6a00;margin-top:-4px"><use href="#star5"/></svg></div>
   <div class="abs" style="left:0;right:0;top:36px;height:16px;line-height:16px;color:#ffe030;font-size:11.8px;letter-spacing:-0.2px">Welcome to my homepage! Last updated: 12/31/1999</div>
  </div>
  <div class="abs" style="left:0;right:0;top:77px;height:24px;line-height:24px;text-align:center;white-space:nowrap"><svg class="ic" width="19" height="19" style="margin-top:-4px"><use href="#spark"/></svg><span style="display:inline-block;transform:scaleX(.9);margin:0 -10px;font-size:21px;font-weight:bold;font-style:italic;color:#ee0000;text-shadow:2px 2px 0 #1010c8;letter-spacing:-1px;vertical-align:top">&nbsp;CHECK OUT MY LINKS!&nbsp;</span><svg class="ic" width="19" height="19" style="margin-top:-4px"><use href="#spark"/></svg></div>

  <div class="sec" style="top:112px;height:119px;border-color:#1050f0;background:#c2dafa">
   <div class="stitle" style="top:6px;color:#0a36a8"><svg class="ic" width="19" height="15" style="margin-top:-3px"><use href="#bird"/></svg> TWITTER STUFF <svg class="ic" width="19" height="15" style="margin-top:-3px"><use href="#bird"/></svg></div>
   <div class="sbtn" style="top:36px;background:#2a7af2"><svg class="ic" width="14" height="11" style="margin-top:-3px"><use href="#arrow"/></svg> MAIN ACCOUNT <svg class="ic" width="14" height="11" style="margin-top:-3px"><use href="#arrow"/></svg></div>
   <div class="sbtn" style="top:72px;background:#2a7af2"><svg class="ic" width="14" height="11" style="margin-top:-3px"><use href="#arrow"/></svg> COMMUNITY <svg class="ic" width="14" height="11" style="margin-top:-3px"><use href="#arrow"/></svg></div>
  </div>

  <div class="sec" style="top:244px;height:84px;border-color:#9410f0;background:#e8d8fa">
   <div class="stitle" style="top:7px;color:#6a0cb8"><svg class="ic" width="17" height="19" style="margin-top:-4px"><use href="#note"/></svg> MULTIMEDIA <svg class="ic" width="19" height="15" style="margin-top:-3px"><use href="#cam"/></svg></div>
   <div class="sbtn" style="top:36px;width:343px;background:#a545f5"><svg class="ic" width="17" height="19" style="margin-top:-4px"><use href="#note"/></svg> TIKTOK</div>
   <div class="sbtn" style="top:36px;left:359px;width:343px;background:#f23496"><svg class="ic" width="19" height="15" style="margin-top:-3px"><use href="#cam"/></svg> INSTA</div>
  </div>

  <div class="sec" style="top:340px;height:120px;border-color:#10a844;background:#c0f2d2">
   <div class="stitle" style="top:7px;color:#0a4a28"><svg class="ic" width="18" height="17" style="margin-top:-4px"><use href="#bubble"/></svg> TELEGRAM CHAT <svg class="ic" width="18" height="17" style="margin-top:-4px"><use href="#bubble"/></svg></div>
   <div class="sbtn" style="top:36px;background:#00c452"><svg class="ic" width="14" height="11" style="margin-top:-3px"><use href="#arrow"/></svg> MAIN PORTAL <svg class="ic" width="14" height="11" style="margin-top:-3px"><use href="#arrow"/></svg></div>
   <div class="sbtn" style="top:72px;background:#00c452"><svg class="ic" width="14" height="11" style="margin-top:-3px"><use href="#arrow"/></svg> Y2K CHANNEL <svg class="ic" width="14" height="11" style="margin-top:-3px"><use href="#arrow"/></svg></div>
  </div>

  <div class="sec" style="top:472px;height:84px;border-color:#5030e8;background:#c8d2fa">
   <div class="stitle" style="top:7px;color:#1a2aa8;letter-spacing:-0.5px"><svg class="ic" width="19" height="16" style="margin-top:-4px"><use href="#pad"/></svg> DISCORD SERVER <svg class="ic" width="19" height="16" style="margin-top:-4px"><use href="#pad"/></svg></div>
   <div class="sbtn" style="top:36px;background:#5a55ec"><svg class="ic" width="14" height="11" style="margin-top:-3px"><use href="#arrow"/></svg> <span style="letter-spacing:0.5px">JOIN SERVER</span> <svg class="ic" width="14" height="11" style="margin-top:-3px"><use href="#arrow"/></svg></div>
  </div>

  <div class="sec" style="top:568px;height:64px;border:3px solid #ff6600;background:#ffe020">
   <svg class="abs" style="left:245px;top:9px" width="18" height="18"><use href="#starw"/></svg>
   <div class="abs" style="left:265px;top:8px;height:20px;line-height:20px;white-space:nowrap;color:#ee1100;font-size:16.5px;letter-spacing:-0.3px">VISITOR COUNTER: 001999</div>
   <div class="abs" style="left:235px;top:33px;height:16px;line-height:16px;white-space:nowrap;color:#1a4ad8;font-size:13px;font-style:italic">Made with <svg class="ic" width="15" height="14" style="margin-top:-3px"><use href="#heart"/></svg> on a Pentium III</div>
  </div>
 </div>
</div>
<!-- Now playing -->
<div class="abs np" style="left:212px;top:599px;width:550px;height:642px;z-index:3">
 <div class="abs nptb"><span class="npt">//NOW PLAYING//</span>
  <div class="npbtn" style="left:496px"><i style="position:absolute;left:6px;top:12px;width:8px;height:2px;background:#bbb"></i></div>
  <div class="npbtn" style="left:520px"><svg width="18" height="17" style="position:absolute;left:0;top:0"><path d="M5.5 5 L12.5 12 M12.5 5 L5.5 12" stroke="#ddd" stroke-width="1.6"/></svg></div>
 </div>
 <div class="abs" style="left:9px;top:38px;width:530px;height:533px;background:#000">
  <div class="abs npbox" style="left:9px;top:9px;width:513px;height:75px">
   <div class="abs" style="left:12px;top:14px;font-family:'Liberation Mono',monospace;font-weight:bold;font-size:16.8px;color:#00ff00;text-shadow:0 0 5px rgba(0,255,0,.55);white-space:nowrap"><svg width="7" height="7" style="vertical-align:2px;margin-left:1px;margin-right:12px"><path d="M0 0 L7 3.5 L0 7Z" fill="#00ff00"/></svg>Stranger Things Theme</div>
   <div class="abs" style="left:12px;top:46px;font-family:'Liberation Mono',monospace;font-size:12px;color:#00aa00;white-space:nowrap;text-shadow:0 0 3px rgba(0,200,0,.4)">Artist: Kyle Dixon &amp; Michael Stein</div>
  </div>
  <div class="abs pl" style="left:9px;top:93px;width:513px;height:319px"><div class="pli act">1. Stranger Things Theme - Kyle Dixon &amp; Michael Stein</div><div class="pli">2. First Love - Utada Hikaru</div><div class="pli">3. Better Off Alone - Alice DeeJay</div><div class="pli">4. Paper Planes - M.I.A.</div><div class="pli">5. Haruka Kanata - Asian Kung-Fu Generation</div><div class="pli">6. Dearly Beloved - Yoko Shimomura</div><div class="pli">7. Ants - edit</div><div class="pli">8. When You Were Young - The Killers</div><div class="pli">9. TIC TAC - Uki Satake</div><div class="pli">10. April 14th - Aphex Twin</div>
   <div class="abs" style="left:504px;top:0;width:8px;height:168px;background:#00ff00;border-radius:4px"></div>
  </div>
  <div class="abs viz" style="left:9px;top:426px;width:513px;height:38px"><i style="height:32.0px"></i><i style="height:31.9px"></i><i style="height:31.8px"></i><i style="height:31.6px"></i><i style="height:31.5px"></i><i style="height:27.5px"></i><i style="height:27.5px"></i><i style="height:27.5px"></i><i style="height:26.0px"></i><i style="height:26.0px"></i><i style="height:24.5px"></i><i style="height:24.5px"></i><i style="height:24.5px"></i><i style="height:24.5px"></i><i style="height:24.5px"></i><i style="height:24.5px"></i><i style="height:24.5px"></i><i style="height:24.5px"></i><i style="height:24.5px"></i><i style="height:24.5px"></i><i style="height:23.5px"></i><i style="height:23.4px"></i><i style="height:23.4px"></i><i style="height:23.3px"></i><i style="height:23.2px"></i><i style="height:23.2px"></i><i style="height:23.1px"></i><i style="height:23.1px"></i><i style="height:23.0px"></i><i style="height:22.8px"></i><i style="height:22.6px"></i><i style="height:22.4px"></i><i style="height:22.2px"></i><i style="height:22.0px"></i><i style="height:21.8px"></i><i style="height:21.7px"></i><i style="height:21.5px"></i><i style="height:21.3px"></i><i style="height:21.2px"></i><i style="height:21.0px"></i><i style="height:21.0px"></i><i style="height:21.1px"></i><i style="height:21.1px"></i><i style="height:21.2px"></i><i style="height:21.2px"></i><i style="height:21.3px"></i><i style="height:21.4px"></i><i style="height:21.4px"></i><i style="height:21.5px"></i><i style="height:20.5px"></i><i style="height:19.5px"></i><i style="height:19.1px"></i><i style="height:18.8px"></i><i style="height:18.4px"></i><i style="height:18.0px"></i><i style="height:16.0px"></i><i style="height:16.5px"></i><i style="height:13.0px"></i><i style="height:13.0px"></i><i style="height:13.0px"></i><i style="height:13.0px"></i><i style="height:13.0px"></i><i style="height:13.0px"></i><i style="height:13.0px"></i><i style="height:13.0px"></i><i style="height:13.0px"></i><i style="height:13.0px"></i><i style="height:13.0px"></i><i style="height:13.0px"></i><i style="height:13.0px"></i><i style="height:13.0px"></i><i style="height:13.0px"></i><i style="height:13.0px"></i><i style="height:13.0px"></i><i style="height:13.0px"></i><i style="height:13.0px"></i><i style="height:13.0px"></i><i style="height:13.0px"></i><i style="height:13.0px"></i><i style="height:13.0px"></i></div>
  <div class="abs" style="right:8px;top:478px;font-family:'Liberation Mono',monospace;font-size:14px;color:#00cc00;line-height:18px">0:16 / 2:36</div>
  <div class="abs" style="left:9px;top:506px;width:513px;height:11px;background:#0c0c0c;border-right:1px solid #999;border-bottom:1px solid #999;border-bottom-right-radius:2px">
   <div class="abs" style="left:0;top:0;width:54px;height:10px;background:linear-gradient(90deg,#00e000,#00c000);box-shadow:0 0 6px #00ff00"></div>
  </div>
 </div>
 <div class="abs npctl">
  <div class="npc" style="left:12px;width:36px"><svg width="14" height="10" viewBox="0 0 14 10"><rect x="0" y="0" width="2" height="10" fill="#ddd"/><path d="M8 0 L2 5 L8 10Z M14 0 L8 5 L14 10Z" fill="#ddd"/></svg></div>
  <div class="npc" style="left:56px;width:48px"><svg width="10" height="11" viewBox="0 0 10 11"><rect x="1" y="0" width="3" height="11" fill="#ddd"/><rect x="6" y="0" width="3" height="11" fill="#ddd"/></svg></div>
  <div class="npc" style="left:112px;width:36px"><svg width="9" height="9"><rect width="9" height="9" fill="#ddd"/></svg></div>
  <div class="npc" style="left:156px;width:36px"><svg width="14" height="10" viewBox="0 0 14 10"><path d="M0 0 L6 5 L0 10Z M6 0 L12 5 L6 10Z" fill="#ddd"/><rect x="12" y="0" width="2" height="10" fill="#ddd"/></svg></div>
  <div class="npc" style="left:392px;width:36px"><svg width="36" height="36" viewBox="0 0 36 36" style="position:absolute;left:-1px;top:-1px"><g transform="rotate(48 18 16)"><ellipse cx="13" cy="24.5" rx="3.2" ry="2.6" fill="#0a0a0a" stroke="#9a9a9a" stroke-width=".8" transform="rotate(-48 18 16) rotate(48 13 24.5)"/></g><ellipse cx="19.8" cy="14.2" rx="9" ry="4.3" fill="none" stroke="#8a8a8a" stroke-width=".9" transform="rotate(50 19.8 14.2)"/><ellipse cx="18" cy="16" rx="9" ry="4.3" fill="#0c0c0c" stroke="#d8d8d8" stroke-width="1.1" transform="rotate(50 18 16)"/><ellipse cx="17.6" cy="16.6" rx="3.2" ry="2.2" fill="#c8c8c8" transform="rotate(50 17.6 16.6)"/><path d="M21 12.5 Q24 15 23.5 19" stroke="#3ab0a8" stroke-width="1.4" fill="none" stroke-dasharray="1.5 .8"/><path d="M14 20 L11 23" stroke="#bbb" stroke-width="2.5"/></svg></div>
  <div class="abs" style="left:436px;top:28px;width:100px;height:6px;background:#050505;border-radius:3px;border-bottom:1px solid #888;border-right:1px solid #666"></div>
  <div class="abs" style="left:480px;top:22px;width:12px;height:18px;border:1px solid #777;border-radius:2px;background:linear-gradient(180deg,#5a5a5a,#3a3a3a)"></div>
 </div>
</div>
<!-- Coin -->
<div class="win" style="left:959px;top:591px;width:651px;height:275px;z-index:2">
 <div class="tb" style="letter-spacing:.5px">Coin Info</div>

 <div class="abs" style="left:1px;top:30px;width:645px;height:241px;background:#e6e6e6"></div>
 <div class="abs" style="left:636px;top:261px;width:8px;height:8px;background:linear-gradient(135deg,transparent 0 50%,#8a92a0 50% 62%,transparent 62% 72%,#8a92a0 72% 84%,transparent 84%)"></div>
 <div class="abs" style="left:6px;top:34px;width:635px;height:231px;background:#c0c0c0;border-top:1px solid #9a9a9a;border-left:1px solid #9a9a9a">
  <div class="card" style="left:7px;top:7px;height:38px">
   <div class="abs" style="left:6px;top:6px;width:603px;height:23px;border:1px solid #8a96a8;background:linear-gradient(180deg,#f4f4f4,#e8e8e8);text-align:center;font-weight:bold;font-size:12.5px;line-height:23px;color:#000"><svg class="ic" width="13" height="14" style="margin-top:-3px;margin-right:4px" viewBox="0 0 13 14"><rect x="0" y="0" width="13" height="14" fill="#fff" opacity=".6"/><rect x="1" y="6" width="3" height="8" fill="#18b018"/><rect x="5" y="9" width="3" height="5" fill="#e01818"/><rect x="9" y="2" width="3" height="12" fill="#2050d8"/></svg>View Chart on DexScreener<svg class="ic" width="14" height="10" style="margin-top:-3px;margin-left:5px" viewBox="0 0 14 10"><path d="M0 5 H11" stroke="#000" stroke-width="1.6"/><path d="M8 1.5 L12.5 5 L8 8.5" stroke="#000" stroke-width="1.6" fill="none"/></svg></div>
  </div>
  <div class="card" style="left:7px;top:51px;height:82px">
   <div class="abs badge" style="left:6px;top:6px;width:29px;background:#008080">SOL</div>
   <div class="abs clab" style="left:39px;top:6px">Solana</div>
   <div class="abs addr" style="left:6px;top:23px">8YiB8B43EwDeSx5Jp91VQjgBU4mfCgVvyNahadtzpump</div>
   <div class="abs cbtn" style="left:7px;top:49px"><svg class="ic" width="12" height="14" style="margin-top:-3px;margin-right:5px" viewBox="0 0 12 14"><rect x="0.5" y="1.5" width="11" height="12" fill="#f4f4f4" stroke="#b89a60"/><rect x="3" y="0" width="6" height="3" fill="#ccc"/></svg>Copy SOL Address</div>
  </div>
  <div class="card" style="left:7px;top:139px;height:82px">
   <div class="abs badge" style="left:6px;top:6px;width:30px;background:#5b82e2">ETH</div>
   <div class="abs clab" style="left:40px;top:6px">Ethereum</div>
   <div class="abs addr" style="left:6px;top:23px">0x06903ae134CCa527742fe138a7CB97Fe08322000</div>
   <div class="abs cbtn" style="left:7px;top:49px"><svg class="ic" width="12" height="14" style="margin-top:-3px;margin-right:5px" viewBox="0 0 12 14"><rect x="0.5" y="1.5" width="11" height="12" fill="#f4f4f4" stroke="#b89a60"/><rect x="3" y="0" width="6" height="3" fill="#ccc"/></svg>Copy ETH Address</div>
  </div>
 </div>
 <div class="tbb" style="left:584px"><i class="gmin"></i></div><div class="tbb" style="left:603px"><i class="gmax"></i></div><div class="tbb" style="left:622px"><i class="gx">x</i></div>
</div>
<!-- Buy -->
<div class="win" style="left:996px;top:953px;width:321px;height:184px;z-index:2">
 <div class="tb" style="letter-spacing:.3px">Buy $Y2K</div>

 <div class="abs" style="left:2px;top:30px;width:313px;height:148px;background:#dedede"></div>
 <div class="abs" style="left:6px;top:34px;width:305px;height:143px;background:#fff">
  <div class="abs" style="left:296px;top:134px;width:9px;height:9px;background:linear-gradient(135deg,transparent 0 50%,#9aa0aa 50% 62%,transparent 62% 72%,#9aa0aa 72% 84%,transparent 84%)"></div>
  <svg width="0" height="0" style="position:absolute"></svg>
 </div>
 <div class="abs" style="left:0;top:52px;width:317px;text-align:center;height:24px;line-height:24px;font-weight:bold;font-size:20.5px;color:#f03c14;letter-spacing:0px"><svg class="ic" width="25" height="21" style="margin-top:-5px;margin-right:8px"><use href="#warn"/></svg>BUY $Y2K<svg class="ic" width="25" height="21" style="margin-top:-5px;margin-left:8px"><use href="#warn"/></svg></div>
 <div class="abs" style="left:0;top:92px;width:313px;text-align:center;height:18px;line-height:18px;font-weight:bold;font-size:15px;color:#000">Join the Nostalgic Renaissance!!!</div>
 <div class="abs" style="left:19px;top:123px;width:280px;height:39px;background:#ffc800;border-right:2px solid #000;border-bottom:3px solid #000;border-top:1px solid #e8b000;border-left:1px solid #e8b000;text-align:center;font-weight:bold;font-size:14.5px;line-height:35px;color:#000">BUY NOW</div>
 <div class="tbb" style="left:253px"><i class="gmin"></i></div><div class="tbb" style="left:272px"><i class="gmax"></i></div><div class="tbb" style="left:291px"><i class="gx">x</i></div>
</div>

<div id="scan" class="abs"></div>
</body></html>
